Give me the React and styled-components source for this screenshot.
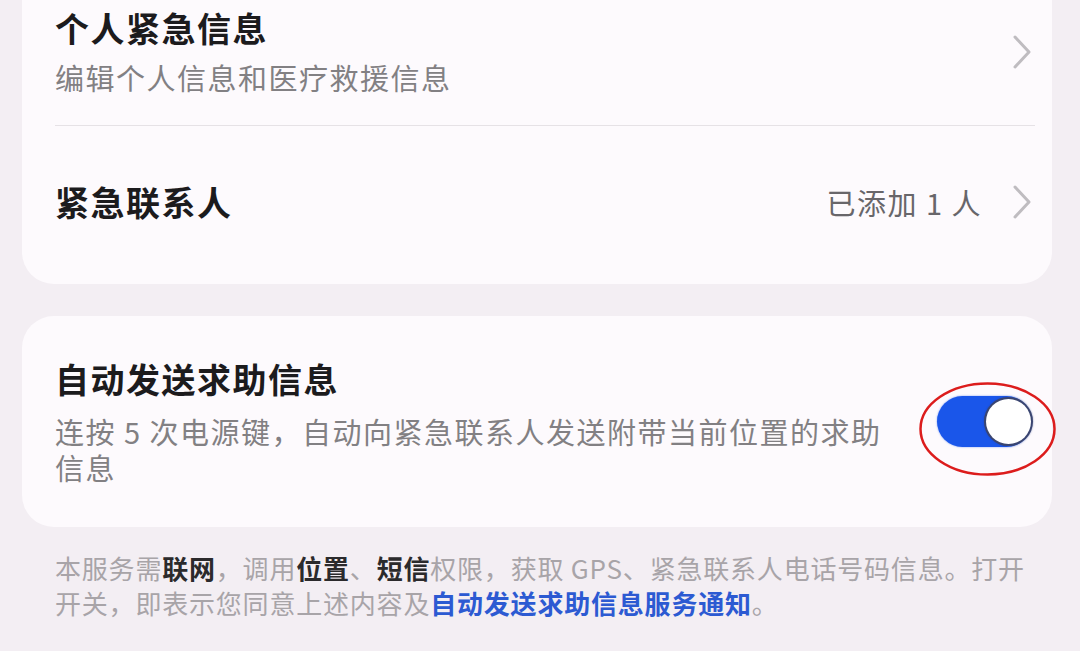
import React from 'react';
import styled, { createGlobalStyle } from 'styled-components';

const GlobalStyle = createGlobalStyle`
  html, body {
    margin: 0;
    padding: 0;
    background: #f3eef3;
    overflow: hidden;
  }
  body {
    font-family: "Noto Sans CJK SC", "Noto Sans", sans-serif;
  }
`;

const Page = styled.div`
  width: 1080px;
  height: 651px;
  box-sizing: border-box;
  padding: 0 28px 0 22px;
  display: flex;
  flex-direction: column;
  gap: 32px;
`;

const Card = styled.div`
  background: #fdfafd;
  border-radius: 32px;
  padding: 0 20px 0 33px;
  margin-top: ${(p) => p.$offset || 0}px;
  padding-bottom: ${(p) => p.$bottom || 0}px;
`;

const Row = styled.div`
  display: flex;
  align-items: center;
  justify-content: space-between;
  box-sizing: border-box;
  padding: ${(p) => p.$pad || '0'};
  height: ${(p) => (p.$height ? `${p.$height}px` : 'auto')};
`;

const TextBlock = styled.div`
  display: flex;
  flex-direction: column;
  gap: ${(p) => p.$gap || 7}px;
  max-width: ${(p) => p.$max || 'none'};
`;

const Title = styled.div`
  font-size: 34px;
  line-height: 44px;
  font-weight: 700;
  letter-spacing: 1.5px;
  color: #1c1b1d;
`;

const Sub = styled.div`
  font-size: 29px;
  line-height: ${(p) => p.$lh || 40}px;
  letter-spacing: 1.5px;
  color: #828083;
`;

const Divider = styled.div`
  height: 1px;
  background: #e6e2e6;
  margin-right: -3px;
`;

const Trail = styled.div`
  display: flex;
  align-items: center;
  gap: 30px;
`;

const Value = styled.span`
  font-size: 29px;
  letter-spacing: 1.5px;
  color: #68666a;
`;

const ToggleWrap = styled.div`
  position: relative;
  width: 95px;
  height: 51px;
  flex-shrink: 0;
`;

const Track = styled.div`
  width: 100%;
  height: 100%;
  border-radius: 26px;
  background: #1a56ea;
  box-shadow: 0 0 2px rgba(26, 86, 234, 0.6);
  display: flex;
  align-items: center;
  justify-content: flex-end;
  padding: 0 1px;
  box-sizing: border-box;
`;

const Knob = styled.div`
  width: 45px;
  height: 45px;
  border-radius: 50%;
  background: #ffffff;
  box-shadow: 0 0 0 2px #3a4570, 0 0 2px 2px rgba(40, 50, 100, 0.4);
`;

const Mark = styled.svg`
  position: absolute;
  left: -18px;
  top: -14px;
  width: 137px;
  height: 94px;
  pointer-events: none;
`;

const Footer = styled.p`
  margin: -9px 0 0 33px;
  width: 985px;
  font-size: 26px;
  line-height: 35px;
  letter-spacing: 0.8px;
  color: #a8a4a8;
`;

const Strong = styled.b`
  color: #2b2a2c;
  font-weight: 700;
`;

const Link = styled.span`
  color: #2c5ad2;
  font-weight: 700;
`;

function Chevron() {
  return (
    <svg width="20" height="34" viewBox="0 0 20 34">
      <polyline points="3,2 17,17 3,32" fill="none" stroke="#bfbcc0" strokeWidth="3" strokeLinecap="round" strokeLinejoin="round" />
    </svg>
  );
}

export default function App() {
  return (
    <>
      <GlobalStyle />
      <Page>
        <Card $offset={-30} $bottom={6}>
          <Row $pad="36px 0 28px">
            <TextBlock>
              <Title>个人紧急信息</Title>
              <Sub>编辑个人信息和医疗救援信息</Sub>
            </TextBlock>
            <Chevron />
          </Row>
          <Divider />
          <Row $height={152}>
            <Title>紧急联系人</Title>
            <Trail>
              <Value>已添加 1 人</Value>
              <Chevron />
            </Trail>
          </Row>
        </Card>
        <Card>
          <Row $pad="41px 0 42px">
            <TextBlock $gap={12} $max="850px">
              <Title>自动发送求助信息</Title>
              <Sub $lh={36}>连按 5 次电源键，自动向紧急联系人发送附带当前位置的求助信息</Sub>
            </TextBlock>
            <ToggleWrap>
              <Track>
                <Knob />
              </Track>
              <Mark viewBox="0 0 137 94">
                <ellipse cx="68.5" cy="47" rx="67" ry="45.5" fill="none" stroke="#dc1c1c" strokeWidth="2.5" />
              </Mark>
            </ToggleWrap>
          </Row>
        </Card>
        <Footer>
          本服务需<Strong>联网</Strong>，调用<Strong>位置</Strong>、<Strong>短信</Strong>权限，获取 GPS、紧急联系人电话号码信息。打开开关，即表示您同意上述内容及<Link>自动发送求助信息服务通知</Link>。
        </Footer>
      </Page>
    </>
  );
}
